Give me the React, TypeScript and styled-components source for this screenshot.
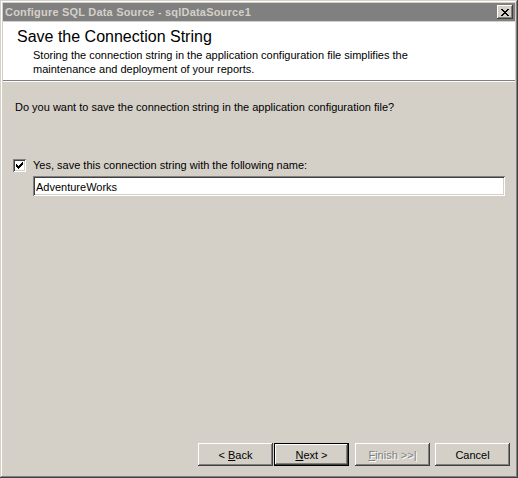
import React, { useState } from 'react';
import styled, { createGlobalStyle, css } from 'styled-components';

const face = '#d4d0c8';
const shadow = '#808080';
const darkShadow = '#404040';
const uiFont = `'Liberation Sans', Arial, sans-serif`;

const GlobalStyle = createGlobalStyle`
  html, body {
    margin: 0;
    padding: 0;
    background: ${face};
  }
  #root {
    width: 518px;
    height: 478px;
  }
`;

// classic 3d borders
const raised = css`
  box-shadow: inset -1px -1px ${darkShadow}, inset 1px 1px #fff,
    inset -2px -2px ${shadow}, inset 2px 2px ${face};
`;
const sunken = css`
  box-shadow: inset 1px 1px ${shadow}, inset -1px -1px #fff,
    inset 2px 2px ${darkShadow}, inset -2px -2px ${face};
`;

const Window = styled.div`
  width: 518px;
  height: 478px;
  box-sizing: border-box;
  padding: 3px;
  display: flex;
  flex-direction: column;
  background: ${face};
  font-family: ${uiFont};
  font-size: 11px;
  color: #000;
  box-shadow: inset -1px -1px ${darkShadow}, inset 1px 1px ${face},
    inset -2px -2px ${shadow}, inset 2px 2px #fff;
`;

const TitleBar = styled.div`
  height: 18px;
  flex: 0 0 auto;
  display: flex;
  align-items: center;
  justify-content: space-between;
  background: ${shadow};
  padding: 0 2px 0 2px;
`;

const TitleText = styled.span`
  color: ${face};
  font-weight: bold;
  font-size: 11px;
  letter-spacing: 0.2px;
`;

const CloseButton = styled.button`
  width: 16px;
  height: 14px;
  padding: 0;
  border: 0;
  background: ${face};
  display: flex;
  align-items: center;
  justify-content: center;
  ${raised};
`;

const Client = styled.div`
  flex: 1;
  display: flex;
  flex-direction: column;
  margin-top: 1px;
`;

const Header = styled.div`
  background: #fff;
  height: 59px;
  padding: 5px 0 0 14px;
  box-sizing: border-box;
  border-bottom: 1px solid ${shadow};
  box-shadow: 0 1px 0 #fff;
`;

const HeaderTitle = styled.div`
  font-size: 16px;
  line-height: 19px;
  margin-bottom: 2px;
`;

const HeaderText = styled.div`
  padding-left: 16px;
  line-height: 14px;
`;

const Body = styled.div`
  flex: 1;
  display: flex;
  flex-direction: column;
  padding: 19px 5px 0 12px;
`;

const Question = styled.div`
  line-height: 14px;
`;

const CheckRow = styled.label`
  display: flex;
  align-items: center;
  gap: 7px;
  margin-top: 44px;
  margin-left: -2px;
  line-height: 14px;
`;

const CheckBox = styled.span`
  width: 13px;
  height: 13px;
  box-sizing: border-box;
  background: #fff;
  display: flex;
  align-items: center;
  justify-content: center;
  ${sunken};
`;

const NameInput = styled.input`
  margin: 4px 0 0 18px;
  width: 472px;
  height: 20px;
  box-sizing: border-box;
  border: 0;
  outline: none;
  padding: 2px 3px 1px;
  font-family: ${uiFont};
  font-size: 11px;
  background: #fff;
  ${sunken};
`;

const ButtonBar = styled.div`
  margin-top: auto;
  display: flex;
  justify-content: flex-end;
  padding: 0 0 9px 0;
`;

const Button = styled.button<{ $default?: boolean; $gap: number }>`
  flex: 0 0 75px;
  width: 75px;
  height: 23px;
  margin-left: ${(p) => p.$gap}px;
  padding: 0;
  border: 0;
  background: ${face};
  font-family: ${uiFont};
  font-size: 11px;
  color: #000;
  ${raised};
  ${(p) =>
    p.$default &&
    css`
      box-shadow: inset 0 0 0 1px #000, inset -2px -2px ${darkShadow},
        inset 2px 2px #fff, inset -3px -3px ${shadow};
    `}
  &:disabled {
    color: ${shadow};
    text-shadow: 1px 1px 0 #fff;
  }
`;

const Key = styled.span`
  text-decoration: underline;
`;

const CheckMark = () => (
  <svg width="7" height="7" viewBox="0 0 7 7" shapeRendering="crispEdges">
    <path
      d="M0 2h1v3H0zM1 3h1v3H1zM2 4h1v3H2zM3 3h1v3H3zM4 2h1v3H4zM5 1h1v3H5zM6 0h1v3H6z"
      fill="#000"
    />
  </svg>
);

const CloseGlyph = () => (
  <svg width="8" height="7" viewBox="0 0 8 7" shapeRendering="crispEdges">
    <path
      d="M0 0h2v1H0zM6 0h2v1H6zM1 1h2v1H1zM5 1h2v1H5zM2 2h4v1H2zM3 3h2v1H3zM2 4h4v1H2zM1 5h2v1H1zM5 5h2v1H5zM0 6h2v1H0zM6 6h2v1H6z"
      fill="#000"
    />
  </svg>
);

export default function App() {
  const [save, setSave] = useState(true);
  const [name, setName] = useState('AdventureWorks');

  return (
    <>
      <GlobalStyle />
      <Window>
        <TitleBar>
          <TitleText>Configure SQL Data Source - sqlDataSource1</TitleText>
          <CloseButton aria-label="Close">
            <CloseGlyph />
          </CloseButton>
        </TitleBar>
        <Client>
          <Header>
            <HeaderTitle>Save the Connection String</HeaderTitle>
            <HeaderText>
              Storing the connection string in the application configuration file simplifies the
              <br />
              maintenance and deployment of your reports.
            </HeaderText>
          </Header>
          <Body>
            <Question>
              Do you want to save the connection string in the application configuration file?
            </Question>
            <CheckRow onClick={() => setSave(!save)}>
              <CheckBox>{save && <CheckMark />}</CheckBox>
              Yes, save this connection string with the following name:
            </CheckRow>
            <NameInput value={name} onChange={(e) => setName(e.target.value)} />
            <ButtonBar>
              <Button $gap={0}>
                &lt; <Key>B</Key>ack
              </Button>
              <Button $gap={1} $default>
                <Key>N</Key>ext &gt;
              </Button>
              <Button $gap={6} disabled>
                <Key>F</Key>inish &gt;&gt;|
              </Button>
              <Button $gap={5}>Cancel</Button>
            </ButtonBar>
          </Body>
        </Client>
      </Window>
    </>
  );
}
